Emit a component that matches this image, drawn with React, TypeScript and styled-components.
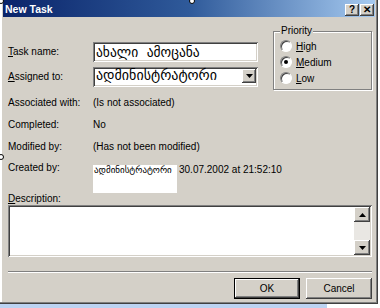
import React from "react";
import styled, { createGlobalStyle } from "styled-components";

const GlobalStyle = createGlobalStyle`
  html, body {
    margin: 0;
    padding: 0;
    background: #fff;
  }
  body {
    width: 380px;
    height: 308px;
    overflow: hidden;
    position: relative;
    font-family: "Liberation Sans", Arial, sans-serif;
    font-size: 10px;
    color: #000;
  }
`;

const raised = `
  box-shadow: inset -1px -1px #404040, inset 1px 1px #fff,
    inset -2px -2px #808080, inset 2px 2px #d4d0c8;
`;

const sunken = `
  box-shadow: inset 1px 1px #808080, inset -1px -1px #fff,
    inset 2px 2px #404040, inset -2px -2px #d4d0c8;
`;

const Window = styled.div`
  width: 378px;
  height: 304px;
  box-sizing: border-box;
  background: #d4d0c8;
  padding: 0 3px 3px 3px;
  box-shadow: inset -1px -1px #404040, inset -2px -2px #808080,
    inset 2px 0 #fff;
  display: flex;
  flex-direction: column;
`;

const TitleBar = styled.div`
  height: 17px;
  display: flex;
  align-items: center;
  padding: 0 1px 0 2px;
  background: linear-gradient(to right, #0a246a 0%, #2f5a9a 50%, #a6caf0 100%);
`;

const Title = styled.span`
  flex: 1;
  color: #fff;
  font-weight: bold;
  font-size: 10.5px;
`;

const CaptionButton = styled.span`
  width: 14px;
  height: 12px;
  margin-left: 1px;
  margin-top: 3px;
  background: #d4d0c8;
  ${raised}
  display: flex;
  align-items: center;
  justify-content: center;
  font-weight: bold;
  font-size: 10px;
  line-height: 10px;
  color: #000;
`;

const Content = styled.div`
  flex: 1;
  display: flex;
  flex-direction: column;
  padding: 0 3px 0 5px;
`;

const TopSection = styled.div`
  display: flex;
  margin-top: 8px;
`;

const FieldGrid = styled.div`
  display: grid;
  grid-template-columns: 85px 165px;
  grid-auto-rows: 20px;
  row-gap: 5px;
  padding-top: 17px;
  align-items: center;
`;

const Label = styled.span`
  white-space: nowrap;
  line-height: 12px;
`;

const TextBox = styled.div`
  height: 20px;
  box-sizing: border-box;
  background: #fff;
  ${sunken}
  padding-left: 3px;
  font-family: "DejaVu Sans", sans-serif;
  font-size: 13.5px;
  line-height: 20px;
  white-space: pre;
  overflow: hidden;
`;

const Combo = styled.div`
  height: 20px;
  box-sizing: border-box;
  background: #fff;
  ${sunken}
  display: flex;
  padding: 2px 2px 0 3px;
`;

const ComboText = styled.span`
  flex: 1;
  font-family: "DejaVu Sans", sans-serif;
  font-size: 14px;
  line-height: 17px;
  white-space: nowrap;
  overflow: hidden;
  margin-top: -2px;
`;

const DropButton = styled.span`
  width: 14px;
  height: 14px;
  background: #d4d0c8;
  ${raised}
  display: flex;
  align-items: center;
  justify-content: center;
`;

const Group = styled.fieldset`
  margin: 0 0 0 15px;
  width: 100px;
  height: 65px;
  box-sizing: border-box;
  padding: 1px 0 0 6px;
  border: 1px solid #808080;
  box-shadow: inset 1px 1px #fff, 1px 1px #fff;
`;

const Legend = styled.legend`
  padding: 0 1px;
  margin-left: 0;
  line-height: 12px;
  background: #d4d0c8;
`;

const RadioRow = styled.label`
  display: flex;
  align-items: center;
  height: 16px;
  gap: 4px;
`;

const RadioCircle = styled.span<{ $checked?: boolean }>`
  width: 12px;
  height: 12px;
  box-sizing: border-box;
  border-radius: 50%;
  border: 1px solid;
  border-color: #808080 #fff #fff #808080;
  background: #fff;
  box-shadow: inset 1px 1px #404040;
  display: flex;
  align-items: center;
  justify-content: center;
  &::after {
    content: "";
    width: 4px;
    height: 4px;
    border-radius: 50%;
    background: ${(p) => (p.$checked ? "#000" : "transparent")};
  }
`;

const InfoRow = styled.div<{ $first?: boolean }>`
  display: grid;
  grid-template-columns: 85px auto;
  height: 22px;
  align-items: center;
  margin-top: ${(p) => (p.$first ? "2px" : "0")};
  line-height: 12px;
`;

const CreatedRow = styled.div`
  display: flex;
  align-items: flex-start;
  margin-top: 7px;
  line-height: 12px;
`;

const CreatedLabel = styled.span`
  width: 85px;
  margin-top: -3px;
`;

const UserBox = styled.div`
  width: 84px;
  height: 28px;
  background: #fff;
  font-family: "DejaVu Sans", sans-serif;
  font-size: 9px;
  line-height: 10px;
  padding-left: 1px;
  box-sizing: border-box;
  white-space: nowrap;
  overflow: hidden;
`;

const DateText = styled.span`
  margin-left: 2px;
  margin-top: -1px;
`;

const DescLabel = styled.span`
  line-height: 11px;
`;

const TextArea = styled.div`
  margin-top: 1px;
  width: 364px;
  height: 52px;
  box-sizing: border-box;
  background: #fff;
  ${sunken}
  padding: 2px;
  display: flex;
  justify-content: flex-end;
`;

const ScrollBar = styled.div`
  width: 16px;
  display: flex;
  flex-direction: column;
  justify-content: space-between;
  background: #e9e7e3;
`;

const ScrollButton = styled.span`
  height: 15px;
  background: #d4d0c8;
  ${raised}
  display: flex;
  align-items: center;
  justify-content: center;
`;

const Separator = styled.div`
  margin-top: 14px;
  width: 364px;
  border-top: 1px solid #808080;
  border-bottom: 1px solid #fff;
`;

const ButtonRow = styled.div`
  display: flex;
  justify-content: flex-end;
  gap: 6px;
  margin-top: 5px;
`;

const Button = styled.button<{ $default?: boolean }>`
  width: 66px;
  height: 21px;
  box-sizing: border-box;
  background: #d4d0c8;
  border: ${(p) => (p.$default ? "1px solid #000" : "none")};
  ${raised}
  font-family: "Liberation Sans", Arial, sans-serif;
  font-size: 10px;
  color: #000;
  padding: 0;
`;

const Taskbar = styled.div`
  width: 327px;
  height: 4px;
  background: #bcd3f2;
`;

const Handle = styled.span<{ $x: number; $y: number }>`
  position: absolute;
  left: ${(p) => p.$x - 3}px;
  top: ${(p) => p.$y - 3}px;
  width: 6px;
  height: 6px;
  box-sizing: border-box;
  border-radius: 50%;
  border: 1px solid #000;
  background: #fff;
`;

const Arrow = ({ down }: { down?: boolean }) => (
  <svg width="7" height="4" viewBox="0 0 7 4">
    <path d={down ? "M0 0H7L3.5 4Z" : "M0 4H7L3.5 0Z"} fill="#000" />
  </svg>
);

export default function App() {
  return (
    <>
      <GlobalStyle />
      <Window>
        <TitleBar>
          <Title>New Task</Title>
          <CaptionButton>?</CaptionButton>
          <CaptionButton>✕</CaptionButton>
        </TitleBar>
        <Content>
          <TopSection>
            <FieldGrid>
              <Label>
                <u>T</u>ask name:
              </Label>
              <TextBox>ახალი  ამოცანა</TextBox>
              <Label>
                <u>A</u>ssigned to:
              </Label>
              <Combo>
                <ComboText>ადმინისტრატორი</ComboText>
                <DropButton>
                  <Arrow down />
                </DropButton>
              </Combo>
            </FieldGrid>
            <Group>
              <Legend>Priority</Legend>
              <RadioRow>
                <RadioCircle />
                <span>
                  <u>H</u>igh
                </span>
              </RadioRow>
              <RadioRow>
                <RadioCircle $checked />
                <span>
                  <u>M</u>edium
                </span>
              </RadioRow>
              <RadioRow>
                <RadioCircle />
                <span>
                  <u>L</u>ow
                </span>
              </RadioRow>
            </Group>
          </TopSection>

          <InfoRow $first>
            <span>Associated with:</span>
            <span>(Is not associated)</span>
          </InfoRow>
          <InfoRow>
            <span>Completed:</span>
            <span>No</span>
          </InfoRow>
          <InfoRow>
            <span>Modified by:</span>
            <span>(Has not been modified)</span>
          </InfoRow>
          <CreatedRow>
            <CreatedLabel>Created by:</CreatedLabel>
            <UserBox>ადმინისტრატორი</UserBox>
            <DateText>30.07.2002 at 21:52:10</DateText>
          </CreatedRow>

          <DescLabel>
            <u>D</u>escription:
          </DescLabel>
          <TextArea>
            <ScrollBar>
              <ScrollButton>
                <Arrow />
              </ScrollButton>
              <ScrollButton>
                <Arrow down />
              </ScrollButton>
            </ScrollBar>
          </TextArea>

          <Separator />
          <ButtonRow>
            <Button $default>OK</Button>
            <Button>Cancel</Button>
          </ButtonRow>
        </Content>
      </Window>
      <Taskbar />
      <Handle $x={1} $y={1} />
      <Handle $x={192} $y={1} />
      <Handle $x={1} $y={157} />
    </>
  );
}
